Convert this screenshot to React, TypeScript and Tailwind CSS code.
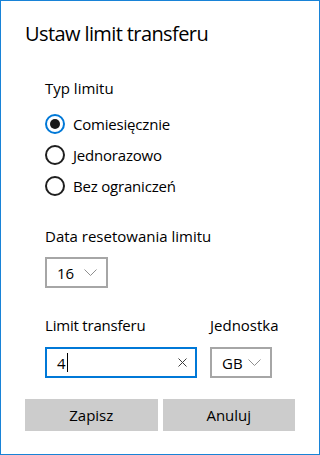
import React, { useState } from 'react';

// Okno dialogowe "Ustaw limit transferu" w stylu Windows 10

function Radio({ checked, label, onSelect }: { checked: boolean; label: string; onSelect: () => void }) {
  return (
    <button type="button" onClick={onSelect} className="flex h-[31px] items-center gap-[8px] text-left">
      <span
        className={
          'flex h-[20px] w-[20px] items-center justify-center rounded-full border-2 ' +
          (checked ? 'border-[#0078d7]' : 'border-[#1f1f1f]')
        }
      >
        {checked && <span className="h-[10px] w-[10px] rounded-full bg-[#1a1a1a]" />}
      </span>
      <span className="text-[15px] leading-[20px] tracking-[-0.2px] text-black">{label}</span>
    </button>
  );
}

function Chevron() {
  return (
    <svg width="13" height="7" viewBox="0 0 13 7" fill="none" className="shrink-0">
      <path d="M0.5 0.5 L6.5 6.5 L12.5 0.5" stroke="#8f8f8f" strokeWidth="1" />
    </svg>
  );
}

function Select({ value, width }: { value: string; width: string }) {
  return (
    <div className={'flex h-[31px] items-center justify-between border-2 border-[#a6a6a6] pl-[10px] pr-[9px] ' + width}>
      <span className="text-[15px] leading-[20px] text-black">{value}</span>
      <Chevron />
    </div>
  );
}

export default function App() {
  const [type, setType] = useState('monthly');
  const [limit, setLimit] = useState('4');

  return (
    <div
      className="flex h-[455px] w-[320px] flex-col border border-[#1883d7] bg-white px-6 pt-[19px]"
      style={{ fontFamily: '"Open Sans", "Noto Sans", sans-serif' }}
    >
      <h1 className="text-[20px] font-normal leading-[28px] tracking-[-0.6px] text-black">Ustaw limit transferu</h1>

      <div className="ml-5 flex flex-col">
        <p className="mt-[30px] text-[15px] leading-[20px] text-black">Typ limitu</p>
        <div className="mt-[10px] flex flex-col">
          <Radio checked={type === 'monthly'} label="Comiesięcznie" onSelect={() => setType('monthly')} />
          <Radio checked={type === 'once'} label="Jednorazowo" onSelect={() => setType('once')} />
          <Radio checked={type === 'none'} label="Bez ograniczeń" onSelect={() => setType('none')} />
        </div>

        <p className="mt-[25px] text-[15px] leading-[20px] text-black">Data resetowania limitu</p>
        <div className="mt-[11px]">
          <Select value="16" width="w-[63px]" />
        </div>

        <div className="mt-[27px] flex gap-[13px]">
          <div className="flex w-[152px] flex-col">
            <p className="text-[15px] leading-[20px] tracking-[-0.2px] text-black">Limit transferu</p>
            <div className="mt-[12px] flex h-[31px] items-center border-2 border-[#0078d7] pl-[10px] pr-[8px]">
              <span className="text-[15px] leading-[20px] text-black">4</span>
              <span className="ml-[1px] h-[19px] w-[1px] bg-black" />
              <input
                value={limit === '4' ? '' : limit}
                onChange={(e) => setLimit(e.target.value)}
                className="w-full min-w-0 bg-transparent text-[15px] leading-[20px] text-black outline-none"
                aria-label="Limit transferu"
              />
              <svg width="9" height="9" viewBox="0 0 9 9" className="shrink-0">
                <path d="M0.5 0.5 L8.5 8.5 M8.5 0.5 L0.5 8.5" stroke="#3c3c3c" strokeWidth="1" />
              </svg>
            </div>
          </div>
          <div className="flex flex-col">
            <p className="text-[15px] leading-[20px] text-black">Jednostka</p>
            <div className="mt-[12px]">
              <Select value="GB" width="w-[62px]" />
            </div>
          </div>
        </div>
      </div>

      <div className="mt-[21px] grid grid-cols-2 gap-[5px]">
        <button type="button" className="h-[32px] bg-[#cccccc] text-[15px] text-black">Zapisz</button>
        <button type="button" className="h-[32px] bg-[#cccccc] text-[15px] text-black">Anuluj</button>
      </div>
    </div>
  );
}
